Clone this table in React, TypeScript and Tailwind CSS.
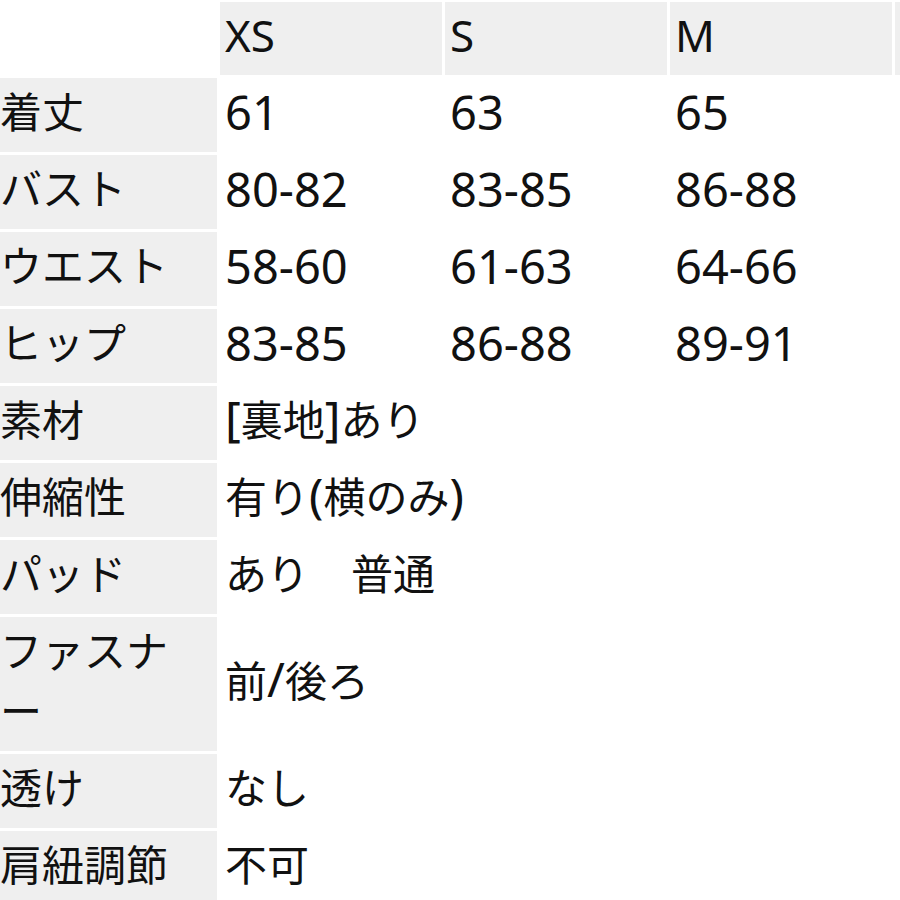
import React from 'react';

const sizes = ['XS', 'S', 'M', 'L'];

const measureRows: { label: string; values: string[] }[] = [
  { label: '着丈', values: ['61', '63', '65', '67'] },
  { label: 'バスト', values: ['80-82', '83-85', '86-88', '89-91'] },
  { label: 'ウエスト', values: ['58-60', '61-63', '64-66', '67-69'] },
  { label: 'ヒップ', values: ['83-85', '86-88', '89-91', '92-94'] },
];

const detailRows: { label: string; value: string }[] = [
  { label: '素材', value: '[裏地]あり' },
  { label: '伸縮性', value: '有り(横のみ)' },
  { label: 'パッド', value: 'あり　普通' },
  { label: 'ファスナー', value: '前/後ろ' },
  { label: '透け', value: 'なし' },
  { label: '肩紐調節', value: '不可' },
];

// latin runs are drawn a little larger than the kana/kanji, like the original font
const Mixed: React.FC<{ text: string }> = ({ text }) => {
  const parts = text.split(/([\x20-\x7e]+)/).filter(Boolean);
  return (
    <>
      {parts.map((p, i) =>
        /^[\x20-\x7e]+$/.test(p) ? (
          <span key={i} className="text-[48px] leading-none">
            {p}
          </span>
        ) : (
          <span key={i}>{p}</span>
        )
      )}
    </>
  );
};

const cell = 'px-[5px] pt-[4px] pb-[10px] leading-[60px] align-middle whitespace-nowrap';
const labelCell = 'bg-[#efefef] pl-[6px] pr-[10px] pt-[4px] pb-[10px] leading-[60px] align-middle';

const App: React.FC = () => {
  return (
    <div
      className="w-[900px] h-[900px] overflow-hidden bg-white text-[#111111] text-[42px]"
      style={{ fontFamily: '"Noto Sans", "Noto Sans CJK JP", sans-serif' }}
    >
      <table className="table-fixed border-separate border-spacing-[3px] -ml-[9px] -mt-[1px] w-[1127px]">
        <colgroup>
          <col className="w-[223px]" />
          <col className="w-[222px]" />
          <col className="w-[222px]" />
          <col className="w-[222px]" />
          <col className="w-[222px]" />
        </colgroup>
        <thead>
          <tr>
            <th className="px-[5px] pt-[3px] pb-[9px] leading-[61px]" />
            {sizes.map((s) => (
              <th
                key={s}
                className="bg-[#efefef] px-[5px] pt-[3px] pb-[9px] leading-[61px] text-left font-normal text-[44px]"
              >
                {s}
              </th>
            ))}
          </tr>
        </thead>
        <tbody>
          {measureRows.map((row) => (
            <tr key={row.label}>
              <td className={labelCell}>{row.label}</td>
              {row.values.map((v, i) => (
                <td key={i} className={`${cell} text-[47px]`}>
                  {v}
                </td>
              ))}
            </tr>
          ))}
          {detailRows.map((row) => (
            <tr key={row.label}>
              <td className={labelCell}>{row.label}</td>
              <td colSpan={4} className={cell}>
                <Mixed text={row.value} />
              </td>
            </tr>
          ))}
        </tbody>
      </table>
    </div>
  );
};

export default App;
